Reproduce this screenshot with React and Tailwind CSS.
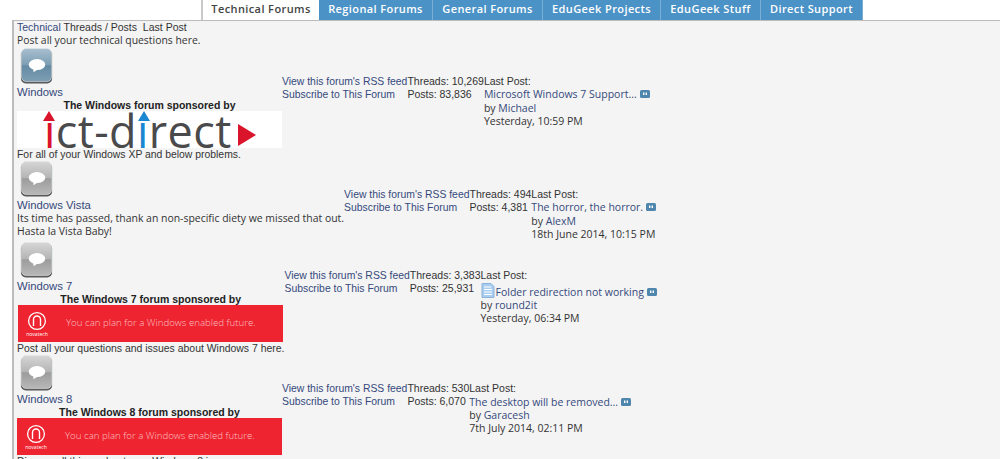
import React from 'react';

const tabs = [
  { label: 'Regional Forums', width: 'w-[114px]' },
  { label: 'General Forums', width: 'w-[110px]' },
  { label: 'EduGeek Projects', width: 'w-[118px]' },
  { label: 'EduGeek Stuff', width: 'w-[100px]' },
  { label: 'Direct Support', width: 'w-[102px]' },
];

const ForumIcon = ({ blue }) => (
  <div className="h-[36px] leading-[0]">
    <svg width="33" height="36" viewBox="0 0 33 37" className="inline align-baseline ml-[3px] mb-[1px]">
      <defs>
        <linearGradient id={blue ? 'iconBlue' : 'iconGrey'} x1="0" y1="0" x2="0" y2="1">
          <stop offset="0" stopColor={blue ? '#a9c0d0' : '#d6d6d6'} />
          <stop offset="0.5" stopColor={blue ? '#7c9db3' : '#b4b4b4'} />
          <stop offset="0.52" stopColor={blue ? '#648aa3' : '#9c9c9c'} />
          <stop offset="1" stopColor={blue ? '#7e9fb5' : '#b8b8b8'} />
        </linearGradient>
      </defs>
      <rect x="0.5" y="1.5" width="32" height="35" rx="5" fill="#555" />
      <rect x="1" y="0.5" width="31" height="34" rx="5" fill={`url(#${blue ? 'iconBlue' : 'iconGrey'})`} stroke="#e4e8ea" strokeWidth="0.6" />
      <ellipse cx="17" cy="17" rx="8.5" ry="5.6" fill="#fff" />
      <path d="M13 20.5 L13.5 25 L18.5 21.5 Z" fill="#fff" />
    </svg>
  </div>
);

const IctBanner = () => (
  <div className="flex w-[265px] h-[37px] bg-white pl-[27px] items-end relative">
    <span className="relative text-[45px] leading-[37px] font-medium tracking-[0.4px] text-[#4a4a4c] font-['Open_Sans',sans-serif] whitespace-nowrap top-[1px]">
      <span className="text-[#d9142b]">ı</span>ct-d<span className="text-[#1b87d0]">ı</span>rect
    </span>
    <svg width="12" height="10" viewBox="0 0 12 10" className="absolute left-[26px] top-0">
      <path d="M0 10 L6 0 L12 10 Z" fill="#d9142b" />
    </svg>
    <svg width="12" height="10" viewBox="0 0 12 10" className="absolute left-[121px] top-0">
      <path d="M0 10 L6 0 L12 10 Z" fill="#1b87d0" />
    </svg>
    <svg width="20" height="24" viewBox="0 0 20 24" className="absolute left-[221px] top-[13px]">
      <path d="M0 0 L18 11 L0 22 Z" fill="#d9142b" />
    </svg>
  </div>
);

const NovatechBanner = () => (
  <div className="flex w-[265px] h-[37px] bg-[#ee2430] items-center">
    <div className="flex flex-col items-center w-[30px] ml-[4px] mr-[14px]">
      <svg width="20" height="20" viewBox="0 0 20 20">
        <circle cx="10" cy="10" r="8.4" fill="none" stroke="#fff" strokeWidth="1.3" />
        <path d="M6.5 15 V8.5 A3.5 3.5 0 0 1 13.5 8.5 V15" fill="none" stroke="#fff" strokeWidth="1.4" />
      </svg>
      <span className="text-[5px] leading-[6px] text-white font-['Open_Sans',sans-serif]">novatech</span>
    </div>
    <span className="text-[9.7px] font-light text-[#fbc0c3] font-['Open_Sans',sans-serif] whitespace-nowrap">You can plan for a Windows enabled future.</span>
  </div>
);

const Speech = () => (
  <svg width="10" height="8" viewBox="0 0 10 8" className="inline align-baseline ml-[3px]">
    <rect x="0" y="0" width="10" height="8" rx="1.5" fill="#4f86ad" />
    <path d="M3 2.5 H4.4 V5 H3 Z M5.6 2.5 H7 V5 H5.6 Z" fill="#fff" />
  </svg>
);

const DocIcon = () => (
  <svg width="14" height="15" viewBox="0 0 14 15" className="inline mr-[1px] align-[-2px]">
    <path d="M1 0.5 H10 L13 3.5 V14.5 H1 Z" fill="#a9cdf0" stroke="#8bb2da" />
    <path d="M3 4 H10 M3 6.5 H11 M3 9 H11 M3 11.5 H11" stroke="#fff" strokeWidth="1" />
  </svg>
);

const Forum = ({ blue, title, sponsor, banner, indent, desc, descFont, threads, posts, post, by, date, doc, className = '' }) => (
  <div className={`flex items-baseline ${className}`}>
    <div className="whitespace-nowrap">
      <ForumIcon blue={blue} />
      <div className="mt-[1px] text-[#34497c] text-[11.3px] leading-[14px]">{title}</div>
      {sponsor && <div className="text-center font-bold text-[10.5px] leading-[13px] text-[#222]">{sponsor}</div>}
      {banner === 'ict' && <div className="mt-[-1px]"><IctBanner /></div>}
      {banner === 'nova' && <div className={`mt-[-1px] ${indent}`}><NovatechBanner /></div>}
      {desc.map((line) => (
        <div key={line} className={`leading-[13px] text-[#333] ${descFont}`}>{line}</div>
      ))}
    </div>
    <div className="whitespace-nowrap text-[#34497c] text-[10.4px] leading-[13px]">
      <div>View this forum's RSS feed</div>
      <div>Subscribe to This Forum</div>
    </div>
    <div className="whitespace-nowrap text-[#333] text-[10.5px] leading-[13px]">
      <div>Threads: {threads}</div>
      <div>Posts: {posts}</div>
    </div>
    <div className="whitespace-nowrap text-[#333] text-[10.5px] leading-[13px]">
      <div>Last Post:</div>
      <div className="font-['Open_Sans',sans-serif] leading-[13.5px] mt-[0.5px] text-[#34497c]">
        {doc && <DocIcon />}{post}<Speech />
      </div>
      <div className="font-['Open_Sans',sans-serif] leading-[12.5px]">by <span className="text-[#34497c]">{by}</span></div>
      <div className="font-['Open_Sans',sans-serif] leading-[13.5px] mt-[0.5px]">{date}</div>
    </div>
  </div>
);

const App = () => {
  return (
    <div className="w-[1000px] h-[459px] overflow-hidden bg-white font-['Liberation_Sans',Arial,sans-serif]">
      {/* Tabs */}
      <div className="flex h-[20px] pl-[201px] font-['Open_Sans',sans-serif] text-[11px] tracking-[0.4px] leading-[18px]">
        <div className="w-[118px] bg-white border-l-2 border-[#c9c9c9] text-[#444] font-semibold text-center">Technical Forums</div>
        {tabs.map((t) => (
          <div key={t.label} className={`${t.width} bg-[#4b92c6] border-r border-[#7aaed4] text-white font-semibold text-center`}>{t.label}</div>
        ))}
      </div>

      {/* Forum list */}
      <div className="ml-[12px] h-[439px] bg-[#f4f4f4] border-l-2 border-t border-[#bcbcbc] pl-[3px] overflow-hidden">
        <div className="text-[10.5px] leading-[13px] text-[#333]">
          <span className="text-[#34497c]">Technical</span> Threads / Posts &nbsp;Last Post
        </div>
        <div className="text-[10.4px] leading-[13px] mb-[0.5px] text-[#333] font-['Open_Sans',sans-serif]">Post all your technical questions here.</div>

        <Forum
          blue
          title="Windows"
          sponsor="The Windows forum sponsored by"
          banner="ict"
          descFont="text-[10.4px]"
          desc={['For all of your Windows XP and below problems.']}
          threads="10,269"
          posts="83,836"
          post="Microsoft Windows 7 Support..."
          by="Michael"
          date="Yesterday, 10:59 PM"
        />
        <Forum
          className="pb-[1px]"
          title="Windows Vista"
          descFont="text-[10.45px] font-['Open_Sans',sans-serif]"
          desc={['Its time has passed, thank an non-specific diety we missed that out.', 'Hasta la Vista Baby!']}
          threads="494"
          posts="4,381"
          post="The horror, the horror."
          by="AlexM"
          date="18th June 2014, 10:15 PM"
        />
        <Forum
          title="Windows 7"
          sponsor="The Windows 7 forum sponsored by"
          banner="nova"
          indent="ml-[1px]"
          descFont="text-[10.45px]"
          desc={['Post all your questions and issues about Windows 7 here.']}
          threads="3,383"
          posts="25,931"
          post="Folder redirection not working"
          by="round2it"
          date="Yesterday, 06:34 PM"
          doc
        />
        <Forum
          title="Windows 8"
          sponsor="The Windows 8 forum sponsored by"
          banner="nova"
          descFont="text-[10.4px]"
          desc={['Discuss all things about your Windows 8 issues.']}
          threads="530"
          posts="6,070"
          post="The desktop will be removed..."
          by="Garacesh"
          date="7th July 2014, 02:11 PM"
        />
      </div>
    </div>
  );
};

export default App;
